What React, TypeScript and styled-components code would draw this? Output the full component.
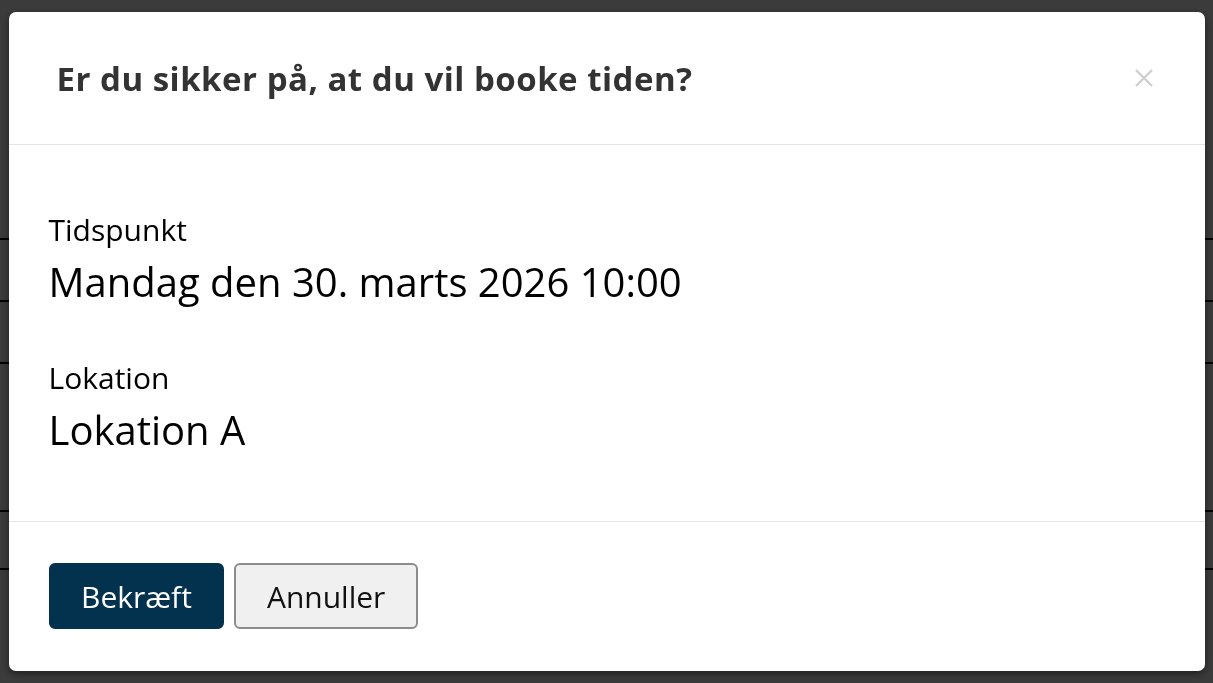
import React from 'react';
import styled, { createGlobalStyle } from 'styled-components';

const GlobalStyle = createGlobalStyle`
  html, body {
    margin: 0;
    padding: 0;
    background: #ffffff;
    font-family: 'Open Sans', 'Noto Sans', sans-serif;
  }
`;

// what sits behind the overlay; only a sliver of it shows at the edges
const slots = [
  { h: 62, text: '' },
  { h: 62, text: '' },
  { h: 148, text: 'Lokation r' },
  { h: 58, text: '0' },
  { h: 91, text: '' },
];

export default function App() {
  return (
    <>
      <GlobalStyle />
      <Page>
        <PageTitle>Vælg tidspunkt for booking</PageTitle>
        <Table>
          {slots.map((s, i) => (
            <Row key={i} $height={s.h}>
              <Cell>{s.text}</Cell>
            </Row>
          ))}
        </Table>
      </Page>

      <Overlay>
        <Dialog role="dialog" aria-modal="true">
          <Header>
            <Heading>Er du sikker på, at du vil booke tiden?</Heading>
            <CloseButton aria-label="Luk">
              <svg width="22" height="22" viewBox="0 0 22 22">
                <path d="M3 3 L19 19 M19 3 L3 19" stroke="currentColor" strokeWidth="2.4" />
              </svg>
            </CloseButton>
          </Header>

          <Body>
            <Field>
              <Label>Tidspunkt</Label>
              <Value>Mandag den 30. marts 2026 10:00</Value>
            </Field>
            <Field>
              <Label>Lokation</Label>
              <Value>Lokation A</Value>
            </Field>
          </Body>

          <Footer>
            <Button $primary>Bekræft</Button>
            <Button>Annuller</Button>
          </Footer>
        </Dialog>
      </Overlay>
    </>
  );
}

const Page = styled.div`
  padding-top: 18px;
  color: #0a2a45;
`;

const PageTitle = styled.h1`
  margin: 0 0 0 -520px;
  height: 220px;
  font-size: 40px;
  font-weight: 400;
`;

const Table = styled.div`
  display: flex;
  flex-direction: column;
`;

const Row = styled.div<{ $height: number }>`
  display: flex;
  align-items: center;
  height: ${(p) => p.$height}px;
  border-top: 2px solid #000;
  box-sizing: border-box;
`;

const Cell = styled.div`
  margin-left: -150px;
  font-size: 30px;
  color: #0a2a45;
`;

const Overlay = styled.div`
  position: fixed;
  inset: 0;
  background: rgba(0, 0, 0, 0.77);
  display: flex;
  justify-content: center;
  align-items: flex-start;
`;

const Dialog = styled.div`
  width: 1196px;
  margin-top: 12px;
  background: #ffffff;
  border-radius: 7px;
  box-shadow: 0 3px 9px rgba(0, 0, 0, 0.5);
  display: flex;
  flex-direction: column;
`;

const Header = styled.div`
  display: flex;
  align-items: center;
  justify-content: space-between;
  height: 132px;
  padding: 0 50px 0 48px;
  border-bottom: 1px solid #e5e5e5;
  box-sizing: content-box;
`;

const Heading = styled.h4`
  margin: 0;
  font-family: 'Open Sans', sans-serif;
  font-size: 33px;
  font-weight: 700;
  color: #333333;
  letter-spacing: 0.5px;
`;

const CloseButton = styled.button`
  border: 0;
  background: transparent;
  padding: 0;
  color: #cfcfcf;
  display: flex;
  cursor: pointer;
`;

const Body = styled.div`
  display: flex;
  flex-direction: column;
  gap: 53px;
  padding: 67px 40px 66px;
  border-bottom: 1px solid #e5e5e5;
`;

const Field = styled.div`
  display: flex;
  flex-direction: column;
  gap: 9px;
  color: #000000;
`;

const Label = styled.div`
  font-size: 30px;
  line-height: 36px;
`;

const Value = styled.div`
  font-size: 40px;
  line-height: 50px;
`;

const Footer = styled.div`
  display: flex;
  gap: 10px;
  padding: 41px 40px 42px;
`;

const Button = styled.button<{ $primary?: boolean }>`
  height: 66px;
  padding: 0 30.5px;
  font-family: 'Open Sans', sans-serif;
  font-size: 30px;
  border-radius: 6px;
  cursor: pointer;
  color: ${(p) => (p.$primary ? '#ffffff' : '#111111')};
  background: ${(p) => (p.$primary ? '#03324f' : '#f0f0f0')};
  border: 2px solid ${(p) => (p.$primary ? '#03324f' : '#8c8c8c')};
`;
